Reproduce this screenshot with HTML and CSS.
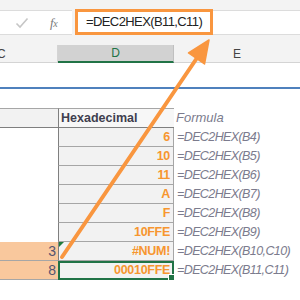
FILE: index.html
```html
<!DOCTYPE html>
<html>
<head>
<meta charset="utf-8">
<link rel="stylesheet" href="styles.css">
</head>
<body>
<div class="app">
  <div class="topstrip"></div>
  <div class="fbar">
    <div class="fx-area">
      <svg class="check" width="14" height="12" viewBox="0 0 14 12"><path d="M1.5 6.5 L5 10 L12.5 1.5" fill="none" stroke="#c6c6c6" stroke-width="1.6"/></svg>
      <span class="fx">f<span class="x">x</span></span>
    </div>
    <div class="finput">=DEC2HEX(B11,C11)</div>
    <div class="frest"></div>
  </div>
  <div class="strip2"></div>
  <div class="colheads">
    <div class="ch ch-c">C</div>
    <div class="ch ch-d">D</div>
    <div class="ch ch-e">E</div>
  </div>
  <div class="sheet">
    <div class="spacer1"></div>
    <div class="blueline"></div>
    <div class="spacer2"></div>
    <div class="grid">
      <div class="lc head"></div><div class="hc head">Hexadecimal</div><div class="fc head">Formula</div>
      <div class="lc"></div><div class="hc">6</div><div class="fc">=DEC2HEX(B4)</div>
      <div class="lc"></div><div class="hc">10</div><div class="fc">=DEC2HEX(B5)</div>
      <div class="lc"></div><div class="hc">11</div><div class="fc">=DEC2HEX(B6)</div>
      <div class="lc"></div><div class="hc">A</div><div class="fc">=DEC2HEX(B7)</div>
      <div class="lc"></div><div class="hc">F</div><div class="fc">=DEC2HEX(B8)</div>
      <div class="lc"></div><div class="hc">10FFE</div><div class="fc">=DEC2HEX(B9)</div>
      <div class="lc peach">3</div><div class="hc err">#NUM!</div><div class="fc">=DEC2HEX(B10,C10)</div>
      <div class="lc peach">8</div><div class="hc sel">00010FFE</div><div class="fc">=DEC2HEX(B11,C11)</div>
    </div>
  </div>
  <svg class="arrow" width="300" height="300" viewBox="0 0 300 300">
    <line x1="62" y1="257" x2="199" y2="55" stroke="#f9963f" stroke-width="4" stroke-linecap="round"/>
    <polygon points="209,40 188.5,53 204.5,64" fill="#f9963f" stroke="#f9963f" stroke-width="1.5" stroke-linejoin="round"/>
  </svg>
</div>
</body>
</html>
```
FILE: styles.css
```css
* { box-sizing: border-box; }
html, body { margin: 0; padding: 0; background: #fff; }
.app {
  position: relative;
  width: 300px;
  height: 300px;
  overflow: hidden;
  font-family: "Liberation Sans", Arial, sans-serif;
}
.topstrip { height: 10px; background: #f3f3f3; }
.fbar {
  height: 25px;
  display: flex;
  background: #f3f3f3;
}
.fx-area {
  width: 72px;
  background: #fff;
  border-top: 1px solid #dcdcdc;
  border-bottom: 1px solid #dcdcdc;
  display: flex;
  align-items: center;
  padding-left: 15px;
  gap: 21px;
}
.check { display: block; margin-top: 1px; }
.fx {
  font-family: "Liberation Serif", "Times New Roman", serif;
  font-style: italic;
  font-size: 13px;
  color: #7a7a7a;
  letter-spacing: -0.5px;
}
.fx .x { font-size: 10px; }
.finput {
  width: 138px;
  margin-left: 3px;
  margin-top: -1px;
  height: 26px;
  border: 3px solid #f9963f;
  background: #fff;
  font-size: 13px;
  letter-spacing: -0.6px;
  color: #222;
  padding-left: 8px;
  line-height: 19px;
}
.frest {
  flex: 1;
  background: #fff;
  border-top: 1px solid #dcdcdc;
  border-bottom: 1px solid #dcdcdc;
}
.strip2 { height: 10px; background: #f3f3f3; }
.colheads {
  height: 18px;
  display: grid;
  grid-template-columns: 58px 116px 1fr;
  background: #f3f3f3;
  font-size: 12px;
  color: #444;
}
.ch {
  display: flex;
  align-items: center;
  justify-content: center;
  border-bottom: 1px solid #d4d4d4;
  border-right: 1px solid #d4d4d4;
}
.ch-c { justify-content: flex-start; margin-left: -3px; }
.ch-d {
  background: #d2d2d2;
  border-bottom: 2px solid #217346;
  color: #217346;
  border-right: 1px solid #c0c0c0;
}
.ch-e { border-right: none; }
.sheet { background: #fff; }
.spacer1 { height: 24px; }
.blueline { height: 2px; background: #4f81bd; }
.spacer2 { height: 19px; }
.grid {
  display: grid;
  grid-template-columns: 58px 116px 1fr;
  grid-template-rows: 20px repeat(8, 19px);
}
.lc {
  border-bottom: 1px solid transparent;
  text-align: right;
  padding-right: 2px;
  font-size: 14px;
  line-height: 18px;
  color: #545470;
}
.lc.head {
  background: #f2f2f2;
  border-top: 1px solid #a6a6a6;
  border-bottom: 1px solid #7f7f7f;
}
.lc.peach {
  background: #f9c89d;
  border-bottom: 1px solid #a6a6a6;
}
.hc {
  position: relative;
  background: #f2f2f2;
  border-left: 1px solid #7f7f7f;
  border-right: 1px solid #a6a6a6;
  border-bottom: 1px solid #a6a6a6;
  text-align: right;
  padding-right: 3px;
  font-weight: bold;
  font-size: 12.5px;
  letter-spacing: -0.3px;
  line-height: 18px;
  color: #f7962f;
}
.hc.head {
  background: #f7f7f7;
  border-top: 1px solid #a6a6a6;
  border-bottom: 1px solid #7f7f7f;
  border-right: none;
  text-align: left;
  padding-left: 2px;
  color: #3f3f4f;
  font-size: 12.5px;
  letter-spacing: 0;
}
.hc.err::before {
  content: "";
  position: absolute;
  left: 0;
  top: 0;
  border-top: 5px solid #1e7b3c;
  border-right: 5px solid transparent;
}
.hc.sel {
  border: 2px solid #217346;
  line-height: 15px;
  padding-right: 2px;
}
.hc.sel::after {
  content: "";
  position: absolute;
  right: -3px;
  bottom: -3px;
  width: 5px;
  height: 5px;
  background: #217346;
  border: 1px solid #fff;
}
.fc {
  font-style: italic;
  font-size: 12.5px;
  letter-spacing: -0.6px;
  color: #7b7b8d;
  padding-left: 3px;
  line-height: 18px;
  white-space: nowrap;
}
.fc.head {
  font-size: 13px;
  letter-spacing: 0;
  line-height: 20px;
  padding-left: 2px;
}
.arrow {
  position: absolute;
  left: 0;
  top: 0;
  pointer-events: none;
}
```
